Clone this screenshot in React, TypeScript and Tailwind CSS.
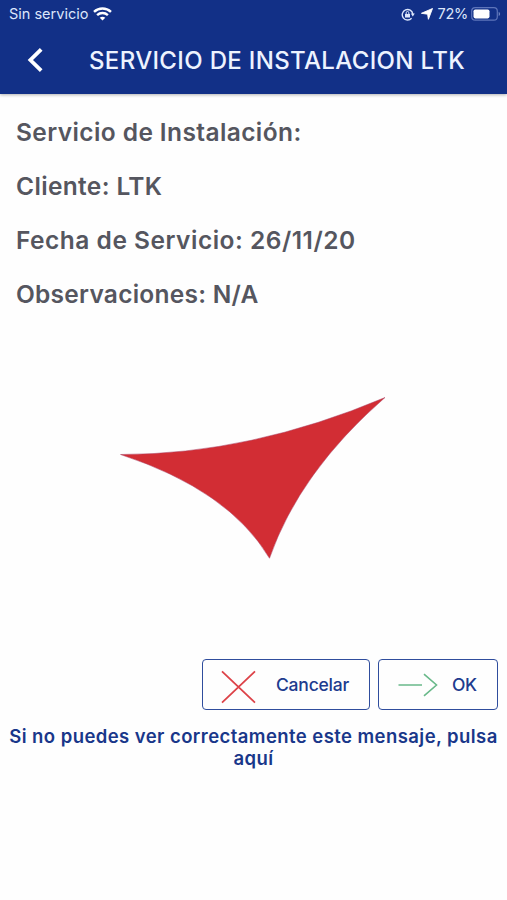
import type { ReactNode } from 'react';

interface Detail {
  id: string;
  text: string;
  className: string;
}

const details: Detail[] = [
  { id: 'service', text: 'Servicio de Instalación:', className: 'tracking-[0.4px]' },
  { id: 'client', text: 'Cliente: LTK', className: 'tracking-[0.35px]' },
  { id: 'date', text: 'Fecha de Servicio: 26/11/20', className: 'tracking-[0.5px]' },
  { id: 'notes', text: 'Observaciones: N/A', className: 'tracking-[0.25px]' },
];

function StatusBar() {
  return (
    <div className="flex h-7 items-center justify-between pl-[9px] pr-[6px] text-[14.5px] text-[#dce6fb]">
      <div className="flex items-center gap-[5px]">
        <span>Sin servicio</span>
        <svg className="h-[15px] w-[19px]" viewBox="0 0 19 15" fill="none" stroke="#fff" strokeWidth="2.4">
          <path d="M1 4.9C5.9.3 13.1.3 18 4.9" />
          <path d="M4.1 8.2c3.1-2.9 7.7-2.9 10.8 0" />
          <path d="M6.7 10.7c1.7-1.4 3.9-1.4 5.6 0L9.5 13.5z" fill="#fff" stroke="none" />
        </svg>
      </div>
      <div className="flex items-center">
        <svg className="mr-[6px] h-[13px] w-[14px]" viewBox="0 0 14 13" fill="none" stroke="#dce6fb" strokeWidth="1.4">
          <path d="M10.6 10.2A5.3 5.3 0 1 1 11.8 6" />
          <path d="M9.8 5.6h4L11.8 8.4z" fill="#dce6fb" stroke="none" />
          <path d="M4 6h5v3.5H4z" fill="#dce6fb" stroke="none" />
          <path d="M5.2 6V4.8a1.3 1.3 0 0 1 2.6 0V6" strokeWidth="1" />
        </svg>
        <svg className="mr-[5px] h-3 w-3" viewBox="0 0 12 12" fill="#fff" stroke="#fff" strokeWidth=".9">
          <path d="M11.5.5 7.4 11.3 6.6 6.2.4 5.3z" />
        </svg>
        <span className="mr-[3px] tracking-[-0.3px]">72%</span>
        <svg className="h-[14px] w-[30px]" viewBox="0 0 30 14" fill="none">
          <rect x=".7" y=".6" width="25.6" height="12.6" rx="3.5" stroke="#5d74ba" strokeWidth="1.2" />
          <rect x="2.5" y="2.4" width="16" height="9" rx="1.8" fill="#fff" />
          <path d="M27.7 4.7c1.9.9 1.9 3.5 0 4.4z" fill="#7185c3" />
        </svg>
      </div>
    </div>
  );
}

function Header() {
  return (
    <header className="h-[94px] bg-[#123087] shadow-[0_1px_3px_rgba(0,0,0,0.3)]">
      <StatusBar />
      <div className="flex h-16 items-center pl-[27px]">
        <button aria-label="Volver">
          <svg className="h-6 w-4" viewBox="0 0 16 24" fill="none" stroke="#fff" strokeWidth="3.8">
            <path d="M14.2 1.4 3.4 12l10.8 10.6" />
          </svg>
        </button>
        <h1 className="ml-[46px] whitespace-nowrap pt-px text-[24px] font-medium tracking-[0.34px] text-[#edf3ff]">
          SERVICIO DE INSTALACION LTK
        </h1>
      </div>
    </header>
  );
}

function ActionButton({ className, icon, label }: { className: string; icon: ReactNode; label: string }) {
  return (
    <button
      className={`flex h-[51px] items-center rounded-[4px] border-[1.5px] border-[#2f4d9d] text-[17.5px] font-medium text-[#203b8e] ${className}`}
    >
      {icon}
      <span className="pt-px">{label}</span>
    </button>
  );
}

export default function App() {
  return (
    <div className="flex h-[900px] w-[507px] flex-col overflow-hidden bg-[#fefefe] font-['Inter',sans-serif]">
      <Header />
      <main>
        <div className="space-y-[18px] pl-4 pt-5">
          {details.map((detail) => (
            <p key={detail.id} className={`text-[24.5px] font-semibold leading-9 text-[#55565f] ${detail.className}`}>
              {detail.text}
            </p>
          ))}
        </div>

        {/* Sail drawing */}
        <svg className="ml-[120px] mt-[84px] h-[164px] w-[267px]" viewBox="120 396 267 164">
          <path
            d="M120.5 454.5Q250 454.5 385 397.5Q299.5 472 269.5 558.3Q229 490 120.5 454.5z"
            fill="#d22d34"
            stroke="#a94163"
            strokeWidth=".5"
          />
        </svg>

        <div className="mt-[99px] flex justify-end gap-2 pr-[9px]">
          <ActionButton
            className="w-[168px] pl-[18px] tracking-[-0.22px]"
            label="Cancelar"
            icon={
              <svg className="mr-[19px] mt-[4px] h-[34px] w-9" viewBox="0 0 36 34" fill="none" stroke="#dd4248" strokeWidth="1.8">
                <path d="M1 1.3 34 32.7M34 1.3 1 32.7" />
              </svg>
            }
          />
          <ActionButton
            className="w-[120px] pl-[19px] tracking-[-0.3px]"
            label="OK"
            icon={
              <svg className="mr-[14px] h-6 w-10" viewBox="0 0 40 24" fill="none" stroke="#69b98a" strokeWidth="1.6">
                <path d="M.5 12H24M26 1.2 38.5 12 26 22.8" />
              </svg>
            }
          />
        </div>

        <p className="mt-[15px] whitespace-nowrap text-center text-[18.5px] font-semibold leading-[22px] tracking-[0.43px] text-[#19378a]">
          Si no puedes ver correctamente este mensaje, pulsa
          <br />
          aquí
        </p>
      </main>
    </div>
  );
}
